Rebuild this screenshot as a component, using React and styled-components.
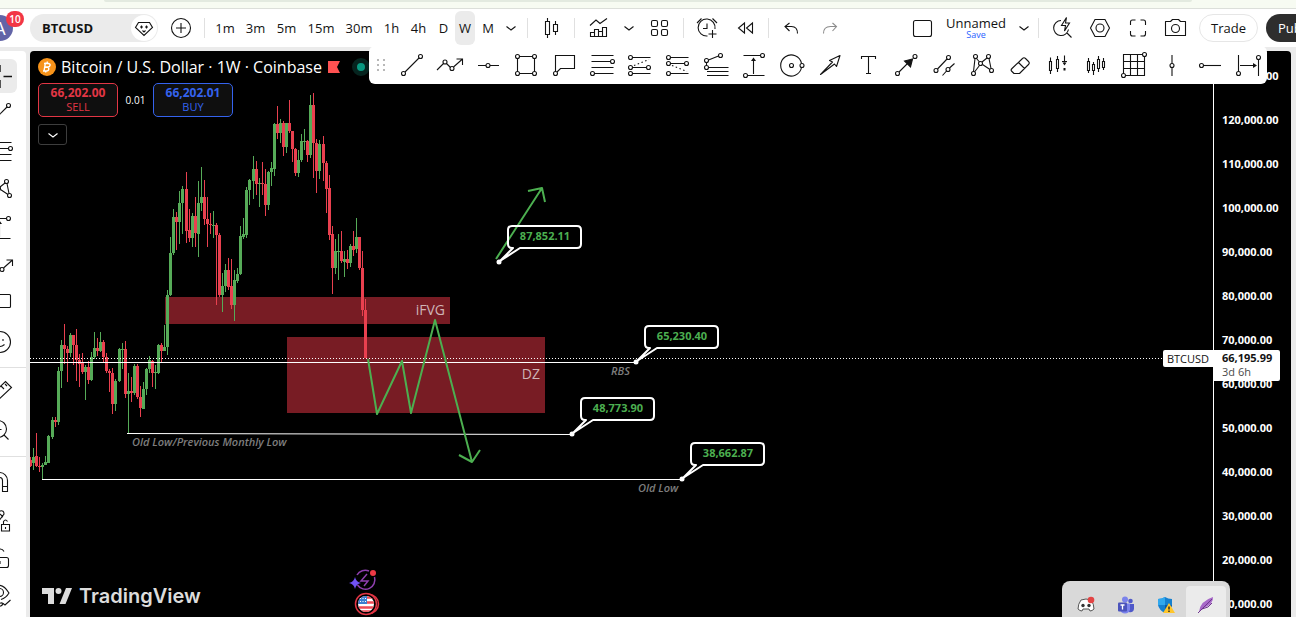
import React from 'react';
import styled, { createGlobalStyle } from 'styled-components';

// [x, direction, high, top, bottom, low], all in thirds of a pixel
const baseLeg = [
    [17, 'r', 470, 480, 498, 500], [25, 'g', 443, 470, 490, 510], [34, 'r', 399, 468, 498, 502],
    [43, 'r', 470, 498, 501, 516], [52, 'g', 488, 494, 500, 540], [61, 'g', 468, 486, 494, 496],
    [70, 'g', 404, 408, 488, 490], [82, 'g', 350, 361, 410, 418], [91, 'r', 350, 361, 366, 380],
    [100, 'g', 202, 213, 366, 374], [109, 'g', 120, 136, 213, 264], [118, 'r', 72, 136, 146, 192],
    [127, 'r', 138, 146, 160, 245], [136, 'g', 98, 106, 160, 172], [145, 'r', 104, 106, 134, 194],
    [154, 'r', 86, 134, 180, 242], [163, 'r', 162, 180, 192, 262], [172, 'r', 158, 190, 216, 222],
    [181, 'g', 194, 200, 216, 300], [190, 'r', 184, 202, 240, 252], [199, 'g', 156, 172, 240, 244],
    [208, 'g', 96, 145, 172, 176], [217, 'r', 114, 145, 152, 168], [226, 'g', 96, 126, 154, 156],
    [235, 'r', 120, 126, 170, 186], [244, 'r', 158, 170, 214, 220], [253, 'r', 208, 212, 220, 276],
    [262, 'r', 204, 220, 312, 342], [271, 'g', 238, 243, 312, 332], [283, 'g', 144, 148, 244, 246],
    [292, 'g', 130, 148, 151, 208], [301, 'r', 122, 148, 281, 294], [310, 'g', 220, 274, 282, 398],
    [319, 'r', 232, 274, 280, 306], [328, 'g', 192, 198, 280, 284], [337, 'r', 192, 198, 292, 296],
    [346, 'r', 258, 292, 325, 352], [355, 'g', 246, 268, 326, 328], [364, 'g', 204, 208, 268, 286],
    [373, 'g', 168, 180, 208, 220], [382, 'r', 180, 182, 220, 260], [391, 'g', 196, 216, 220, 268],
    [400, 'g', 132, 136, 220, 222], [409, 'r', 130, 136, 152, 186], [418, 'g', 76, 140, 152, 154],
];

const rallyLeg = [
    [52, 'g', 600, 616, 770, 795], [61, 'g', 440, 490, 616, 618], [70, 'g', 356, 382, 490, 495],
    [79, 'r', 366, 382, 396, 480], [88, 'g', 302, 340, 396, 462], [97, 'g', 288, 297, 340, 432],
    [109, 'r', 246, 297, 422, 458], [118, 'r', 356, 420, 443, 456], [127, 'g', 370, 378, 443, 470],
    [136, 'r', 320, 378, 430, 470], [145, 'g', 272, 340, 432, 500], [154, 'g', 230, 322, 340, 362],
    [163, 'r', 270, 322, 388, 405], [172, 'r', 320, 388, 402, 470], [181, 'r', 370, 402, 406, 432],
    [190, 'g', 362, 404, 408, 444], [199, 'r', 400, 406, 434, 644], [208, 'r', 430, 434, 614, 620],
    [217, 'g', 548, 588, 614, 666], [226, 'g', 522, 540, 588, 606], [235, 'r', 504, 540, 590, 600],
    [244, 'r', 506, 588, 644, 658], [253, 'g', 540, 570, 644, 692], [262, 'g', 534, 552, 572, 578],
    [271, 'g', 408, 438, 552, 556], [280, 'g', 384, 432, 440, 448], [289, 'g', 290, 300, 434, 444],
    [298, 'g', 266, 270, 300, 344], [310, 'g', 198, 236, 272, 326], [319, 'r', 212, 236, 282, 314],
    [328, 'g', 264, 280, 283, 350], [337, 'r', 216, 280, 283, 316], [346, 'r', 238, 282, 344, 378],
    [355, 'g', 242, 246, 344, 360], [364, 'g', 216, 234, 246, 288], [373, 'g', 98, 102, 236, 258],
    [382, 'r', 48, 102, 130, 148], [391, 'g', 86, 100, 130, 160], [400, 'r', 94, 100, 170, 198],
    [409, 'g', 98, 100, 170, 188], [418, 'r', 30, 100, 124, 130], [427, 'r', 122, 124, 178, 216],
    [436, 'r', 174, 178, 248, 258], [445, 'g', 180, 210, 248, 260], [454, 'g', 132, 154, 210, 216],
    [463, 'g', 116, 152, 156, 180], [472, 'r', 150, 154, 196, 216], [481, 'g', 14, 46, 196, 204],
    [490, 'r', 10, 46, 158, 264], [499, 'r', 146, 158, 242, 308], [508, 'g', 150, 162, 242, 268],
    [520, 'r', 138, 162, 218, 272], [529, 'r', 212, 218, 296, 368], [538, 'r', 256, 294, 434, 450],
    [547, 'r', 408, 432, 534, 612], [556, 'g', 448, 484, 534, 552], [565, 'g', 432, 482, 485, 570],
    [574, 'r', 424, 484, 514, 518], [583, 'g', 484, 508, 516, 560], [592, 'r', 480, 508, 518, 536],
    [601, 'g', 462, 468, 518, 532], [610, 'r', 422, 468, 480, 498], [619, 'g', 384, 442, 478, 488],
    [628, 'r', 440, 442, 534, 540], [637, 'r', 484, 534, 660, 678], [646, 'r', 628, 660, 804, 804],
];

const place = (dx, dy) => ([x, dir, ...levels]) => [
    Math.floor(x / 3) + dx,
    dir,
    ...levels.map(level => Math.round(level / 3) + dy),
];

const candles = [...baseLeg.map(place(-5, 249)), ...rallyLeg.map(place(120, 39))];

const priceTicks = [
    '130,000.00', '120,000.00', '110,000.00', '100,000.00', '90,000.00', '80,000.00', '70,000.00',
    '60,000.00', '50,000.00', '40,000.00', '30,000.00', '20,000.00', '10,000.00',
];

const callouts = [
    { x: 469, y: 211, price: '87,852.11' },
    { x: 606, y: 311, price: '65,230.40' },
    { x: 542, y: 383, price: '48,773.90' },
    { x: 652, y: 428, price: '38,662.87' },
];

const intervals = [
    ['1m', 30], ['3m', 31], ['5m', 31], ['15m', 38], ['30m', 38], ['1h', 27],
    ['4h', 27], ['D', 23], ['W', 20], ['M', 26],
];

const dot = (x, y) => <circle key={`${x}-${y}`} cx={x} cy={y} r="2" />;

const icons = {
    gem: <path d="M8.5 8.5h11l3 5-8.5 8-8.5-8zM11.5 11.5v3M16.5 11.5v3M10 13h3M15 13h3M12.5 16.5L14 18l1.500-1.500" />,
    plusCircle: <><circle cx="14" cy="14" r="9.500" /><path d="M14 9v10M9 14h10" /></>,
    chevron: <path d="M9.500 12.500l4.500 3.500 4.500-3.500" />,
    candles: <path d="M8.500 7.500h4v13h-4zM10.500 4v3.500M10.500 20.500V24M16.500 10.500h4v7h-4zM18.500 7v3.500M18.500 17.500V21" />,
    indicators: <path d="M5 11.500l6-5.500 4 3.500L22 4.500M5.500 22.500v-4h4v4zM9.500 22.500v-7h4v7zM13.500 22.500v-5h4v5zM17.500 22.500v-9h4v9z" />,
    grid: <><rect x="6.500" y="6.500" width="6" height="6" rx="1.500" /><rect x="16.500" y="6.500" width="6" height="6" rx="1.500" /><rect x="6.500" y="15.500" width="6" height="6" rx="1.500" /><rect x="16.500" y="15.500" width="6" height="6" rx="1.500" /></>,
    alarm: <path d="M15.500 22A8.500 8.500 0 1 1 23 15M15 9.500v5h-4M20.500 16v8M16.500 20h8M5 9l4.500-4.500M25 9l-4.500-4.500" />,
    replay: <path d="M10.500 9v10l-6-5zM18.500 9v10l-6-5z" />,
    undo: <path d="M12.500 9L8 12.500l4.500 4.500M8.500 12.500h6q6 0 6 7" />,
    redo: <path d="M16.500 9l4 3.500-4 4.500M20.500 12.500h-6q-7 0-7 7" />,
    layout: <rect x="4.500" y="6.500" width="18" height="16" rx="2" />,
    boltSearch: <path d="M13 6.500a7.500 7.500 0 1 0 7.500 9M18.500 18.500l5 5M18.500 3.500l-5 8h4l-1 5.500 5-8h-4z" />,
    hexagon: <><path d="M9 5.500h10l4.500 8.500-4.500 8.500H9L4.500 14z" /><circle cx="14" cy="14" r="4" /></>,
    fullscreen: <path d="M6.500 11V8q0-2 2-2h3M16.500 6h3q2 0 2 2v3M21.500 17v3q0 2-2 2h-3M11.500 22h-3q-2 0-2-2v-3" />,
    camera: <><path d="M3.500 7.500h5l2-2h6l2 2h5v14h-20z" strokeLinejoin="round" /><circle cx="13.500" cy="14.500" r="4" /></>,
    trend: <>{dot(5.5, 22.5)}{dot(22.5, 5.5)}<path d="M7 21L21 7" /></>,
    path: <>{dot(9, 11)}{dot(16, 17.5)}<path d="M1 19l6.500-6.500M10.500 12.500l4 4M17.500 16L26.500 8M20.500 8h6v6" /></>,
    horizontal: <>{dot(14, 14.5)}<path d="M4 14.500h8M16 14.500h9" /></>,
    rectangle: <>{dot(5.5, 5.5)}{dot(22.5, 5.5)}{dot(5.5, 22.5)}{dot(22.5, 22.5)}<path d="M7.500 5.500h13M7.500 22.500h13M5.500 7.500v13M22.500 7.500v13" /></>,
    comment: <>{dot(5.5, 22.5)}<path d="M5.500 20.500v-16h19v13h-14l-3.500 3.500" /></>,
    fib: <>{dot(24.5, 10.5)}{dot(4.5, 22.5)}<path d="M3.500 4.500h22M3.500 10.500h19M3.500 16.500h22M6.500 22.500h19" /></>,
    forecastUp: <>{dot(4.5, 6.5)}{dot(4.5, 16.5)}{dot(22.5, 16.5)}{dot(4.5, 22.5)}<path d="M6.500 6.500h18M6.500 16.500h14M6.500 22.500h18" /><path d="M8 14.500l15-6" strokeDasharray="1.5 2.5" /></>,
    forecastDown: <>{dot(4.5, 6.5)}{dot(4.5, 12.5)}{dot(22.5, 12.5)}{dot(4.5, 22.5)}<path d="M6.500 6.500h18M6.500 12.500h14M6.500 22.500h18" /><path d="M8 14.500l15 6" strokeDasharray="1.5 2.5" /></>,
    fan: <>{dot(18.5, 4.5)}{dot(4.5, 9.5)}{dot(4.5, 16.5)}<path d="M6.500 9l10-4M4.500 11.500v3M6.500 16.500h20M5 20.500h21.500M5 24.500h21.500" /></>,
    priceRange: <>{dot(22.5, 4.5)}{dot(5.5, 24.5)}<path d="M3.500 4.500h17M7.500 24.500h17M13.500 23V8" /><path d="M11 10l2.500-3.500L16 10z" fill="currentColor" stroke="none" /></>,
    circle: <>{dot(13.5, 14.5)}{dot(24, 14.5)}<path d="M23.500 12.500a10.500 10.500 0 1 0 0 4" /></>,
    arrowMarker: <path d="M4.500 23.500l12-12.500-3-1.500 10.500-5-3.500 11-2-2.500z" strokeLinejoin="round" />,
    text: <path d="M7.500 8V5.500h14V8M14.500 5.500v17M12 22.500h5" />,
    arrowLine: <>{dot(5.5, 22.5)}{dot(23, 5.5)}<path d="M7 21L17 11" /><path d="M20.500 8l-2 8-6-6z" fill="currentColor" /></>,
    parallel: <>{dot(18.5, 6.5)}{dot(6, 19.5)}{dot(18, 18.5)}<path d="M7.500 18L17 8M12.500 24.500l4-4.500M19.500 17l5-4.500" /></>,
    pattern: <>{dot(7.5, 5.5)}{dot(20.5, 5.5)}{dot(12.5, 12.5)}{dot(5.5, 22.5)}{dot(23.5, 19.5)}<path d="M7 7.500l-1.500 13M8.500 7.500l3 3.500M19 7l-5 4M21 7.500l2 10M11.500 14.500l-5 6.500M14.500 13.500l7.500 5" /></>,
    eraser: <path d="M6 17.500L16.500 7.500q1.500-1.500 3 0l3 3q1.500 1.500 0 3l-9 9H8l-2.500-2.500q-1-1 .5-2.500zM12.500 11.500l6 6" strokeLinejoin="round" />,
    barsMinus: <><path d="M5.500 10.500h2v9h-2zM6.500 6.500v4M6.500 19.500V23M12.500 8.500h2v9h-2zM13.500 5v3.500M13.500 17.500V21M20.500 4.500v7M18 10.500h5" /><path d="M18.500 11.500h4l-2 3zM19.500 17h2v2.500h-2z" fill="currentColor" stroke="none" /></>,
    barsGhost: <path d="M5.500 10.500h2v9h-2zM6.500 7v3.500M6.500 19.500V22M10.500 13.500h2v6h-2zM11.500 11v2.500M11.500 19.500V24M15.500 8.500h2v9h-2zM16.500 5v3.500M16.500 17.500V21M20.500 10.500h2v6h-2zM21.500 7v3.500M21.500 16.500V19" />,
    gridLines: <>{dot(24.5, 3.5)}{dot(3.5, 24.5)}<path d="M3.500 22.500v-19h19M24.500 5.500v19h-19M10.500 3.500v21M17.500 3.500v21M3.500 10.500h21M3.500 17.500h21" /></>,
    vertical: <>{dot(14, 14.5)}<path d="M14 4v8.500M14 16.500V25" /></>,
    ray: <>{dot(5.5, 14.5)}<path d="M7.500 14.500H25" /></>,
    dateRange: <>{dot(4.5, 22.5)}{dot(24.5, 6.5)}<path d="M4.500 4v16.500M24.500 8.500V25M6 14.500h15" /><path d="M19 12l4 2.500-4 2.500z" fill="currentColor" stroke="none" /></>,
    cross: <path d="M14 3v7M14 18v8M17.500 14.500H26M2 14.500h8" strokeWidth="1.4" />,
    box: <rect x="3.500" y="4.500" width="21" height="13" rx="1" />,
    smile: <><circle cx="14" cy="14" r="10.500" /><path d="M9.500 16.500q4.500 4 9 0M11 11v2M17 11v2" /></>,
    ruler: <path d="M2.500 18.500L19.500 2.500l6 6-17 16zM15 7l3 3M11.500 10l2 2M19 5l2 2" />,
    zoomOut: <><circle cx="12" cy="12" r="8.500" /><path d="M18 18l4.500 4.500M8.500 12.500h7" /></>,
    magnet: <path d="M5.500 23.500v-11a8 8 0 0 1 16 0v11h-5v-11a3 3 0 0 0-6 0v11zM16.500 18.500h5M5.500 18.500h5" />,
    drawLock: <path d="M4 18l10-13q4-1 4 3L9 20zM14 8l3 3M15.500 18.500h8v6.500h-8zM17.500 18.500v-3q2-3 4 0M19.500 21v2" />,
    lock: <><rect x="5.500" y="13.500" width="17" height="10" rx="2" /><path d="M9.500 13.500V9.500a4.500 4.500 0 0 1 8.500-2M14 17v3" /></>,
    eye: <><path d="M2 10q12-14 21 1-3 5-8 6.500M2 10q4 7 9 7.500" /><circle cx="13.500" cy="10.500" r="4" /><path d="M12 24q4 1 5-2.500-3-2-5 2.500zM17 21.500l2 1.500 5.500-5" /></>,
};

const drawingTools = [
    'trend', 'path', 'horizontal', 'rectangle', 'comment', 'fib', 'forecastUp', 'forecastDown',
    'fan', 'priceRange', 'circle', 'arrowMarker', 'text', 'arrowLine', 'parallel', 'pattern',
    'eraser', 'barsMinus', 'barsGhost', 'gridLines', 'vertical', 'ray', 'dateRange',
];

const sideGroups = [
    ['cross', 'trend', 'fib', 'pattern', 'priceRange', 'path', 'box', 'smile'],
    ['ruler', 'zoomOut'],
    ['magnet', 'drawLock', 'lock', 'eye'],
];

function Icon({ name }) {
    return (
        <IconSvg viewBox="0 0 28 28" aria-hidden="true">{icons[name]}</IconSvg>
    );
}

function Tool({ name, width, muted }) {
    return (
        <IconButton type="button" aria-label={name} $width={width} $muted={muted}>
            <Icon name={name} />
        </IconButton>
    );
}

function TopBar() {
    return (
        <Bar>
            <Account type="button">
                <Avatar>A</Avatar>
                <Badge>10</Badge>
            </Account>
            <SymbolButton type="button">
                BTCUSD
                <GemCircle><Icon name="gem" /></GemCircle>
            </SymbolButton>
            <Tool name="plusCircle" width={46} />
            <Divider />
            <Intervals>
                {intervals.map(([label, width]) => (
                    <Interval key={label} type="button" $width={width} $active={label === 'W'}>{label}</Interval>
                ))}
                <Tool name="chevron" width={20} />
            </Intervals>
            <Divider />
            <Tool name="candles" width={46} />
            <Divider />
            <Tool name="indicators" width={48} />
            <Tool name="chevron" width={12} />
            <Tool name="grid" width={48} />
            <Divider />
            <Tool name="alarm" width={44} />
            <Tool name="replay" width={40} />
            <Divider />
            <Tool name="undo" width={44} />
            <Tool name="redo" width={34} muted />
            <RightGroup>
                <Tool name="layout" width={38} />
                <LayoutName type="button">
                    Unnamed
                    <SaveText>Save</SaveText>
                </LayoutName>
                <Tool name="chevron" width={28} />
                <Divider />
                <RightTools>
                    <Tool name="boltSearch" width={38} />
                    <Tool name="hexagon" width={38} />
                    <Tool name="fullscreen" width={38} />
                    <Tool name="camera" width={38} />
                </RightTools>
                <TradeButton type="button">Trade</TradeButton>
                <PublishButton type="button">Publish</PublishButton>
            </RightGroup>
        </Bar>
    );
}

function SideBar() {
    return (
        <Side>
            {sideGroups.map((group, index) => (
                <SideGroup key={index}>
                    {group.map(name => (
                        <SideButton key={name} type="button" aria-label={name} $active={name === 'cross'}>
                            <Icon name={name} />
                        </SideButton>
                    ))}
                </SideGroup>
            ))}
        </Side>
    );
}

function Callout({ x, y, price }) {
    return (
        <g>
            <path
                d={`M${x + 14} ${y - 14}h-1q-4 0-4-4v-14q0-4 4-4h65q4 0 4 4v14q0 4-4 4h-57L${x + 1} ${y - 1}z`}
                fill="none"
                stroke="#fff"
                strokeWidth="2"
                strokeLinejoin="round"
            />
            <circle cx={x} cy={y} r="2.5" fill="#fff" />
            <CalloutText x={x + 46} y={y - 22}>{price}</CalloutText>
        </g>
    );
}

function Plot() {
    return (
        <PlotSvg>
            <g fill="#781c24">
                <rect x="135" y="246" width="285" height="27" />
                <rect x="257" y="286" width="258" height="76" />
            </g>
            <g shapeRendering="crispEdges">
                {candles.map(([x, dir, high, top, bottom, low]) => (
                    <g key={x} fill={dir === 'g' ? '#56ab58' : '#e9404f'}>
                        <rect x={x} y={high} width="1" height={low - high} />
                        <rect x={x - 1} y={top} width="3" height={Math.max(1, bottom - top)} />
                    </g>
                ))}
                <path d="M0 311.500h606M12 428.500h640" stroke="#fff" fill="none" />
                <path d="M0 307.500h1134" stroke="#fff" strokeDasharray="1 2" fill="none" />
            </g>
            <path d="M97 382.500L542 383.500" stroke="#fff" />
            <ZoneText x="415" y="264">iFVG</ZoneText>
            <ZoneText x="510" y="328">DZ</ZoneText>
            <LevelText x="102" y="395">Old Low/Previous Monthly Low</LevelText>
            <LevelText x="581" y="324">RBS</LevelText>
            <LevelText x="608" y="441">Old Low</LevelText>
            <g fill="none" stroke="#4caf50" strokeWidth="2" strokeLinejoin="round">
                <path d="M338 308l9 55 25-53 9 52 24-93 37 142M429 404l13 7 8-12" />
                <path d="M466 208l46-71M498 140l14-3 3 14" />
            </g>
            {callouts.map(callout => <Callout key={callout.price} {...callout} />)}
            <g fill="none" stroke="#8e3fae" strokeWidth="1.500">
                <path d="M327 524a9.500 9.500 0 0 1 12-4M344.500 526a9.500 9.500 0 0 1-17 8" />
                <path d="M337 523l-6 7h7l-4 5" />
            </g>
            <path d="M325 526q1 5 6 6-5 1-6 6-1-5-6-6 5-1 6-6z" fill="#7152f5" />
            <circle cx="343" cy="522" r="3" fill="#ee3946" />
            <g fill="#000" stroke="#e23544" strokeWidth="1.500">
                <circle cx="339" cy="553" r="9.500" />
                <circle cx="336" cy="553" r="10.500" />
            </g>
            <clipPath id="flag"><circle cx="336" cy="553" r="8" /></clipPath>
            <g clipPath="url(#flag)">
                <rect x="328" y="545" width="16" height="16" fill="#fff" />
                <path d="M328 546.500h16M328 551.500h16M328 556.500h16M328 560.500h16" stroke="#ef4a55" strokeWidth="2.500" />
                <rect x="328" y="545" width="9" height="8" fill="#3c7fd0" />
                <path d="M330 547.500h7M330 550.500h7" stroke="#fff" strokeDasharray="1 1.500" />
            </g>
        </PlotSvg>
    );
}

function Legend() {
    return (
        <LegendBox>
            <LegendTitle>
                <CoinSvg viewBox="0 0 18 18" aria-hidden="true">
                    <circle cx="9" cy="9" r="9" fill="#f7931a" />
                    <path d="M7.500 4.500L6 13M6 5.500h4.500q2 .5 1.500 2t-2 1.500H7q4 0 3.800 2T8.500 13H5M9.500 3.500L9 5M8 13l-.5 1.500" fill="none" stroke="#fff" strokeWidth="1.400" />
                </CoinSvg>
                <span>Bitcoin / U.S. Dollar · 1W · Coinbase</span>
                <FlagSvg viewBox="0 0 12 12" aria-hidden="true">
                    <path d="M0 0h12L9 6l3 6H0z" fill="#ff5252" />
                </FlagSvg>
                <StatusDot />
            </LegendTitle>
            <Quotes>
                <QuoteButton type="button" $color="#e23645"><b>66,202.00</b>SELL</QuoteButton>
                <Spread>0.01</Spread>
                <QuoteButton type="button" $color="#3563ee"><b>66,202.01</b>BUY</QuoteButton>
            </Quotes>
            <Collapse type="button" aria-label="Collapse legend"><Icon name="chevron" /></Collapse>
        </LegendBox>
    );
}

function Tray() {
    return (
        <TrayBox>
            <TrayItem>
                <TraySvg viewBox="0 0 18 18">
                    <path d="M4 4q5-2 10 0 3 4 3 9-2 2-4 2l-1-2H6l-1 2q-2 0-4-2 0-5 3-9z" fill="#fff" stroke="#555" />
                    <circle cx="6" cy="9.500" r="1.700" fill="#333" />
                    <circle cx="12" cy="9.500" r="1.700" fill="#333" />
                    <circle cx="14" cy="4" r="3.300" fill="#e34444" />
                </TraySvg>
            </TrayItem>
            <TrayItem>
                <TraySvg viewBox="0 0 18 18">
                    <circle cx="13.500" cy="5" r="2.300" fill="#5059c9" />
                    <circle cx="8" cy="3.500" r="3" fill="#7b83eb" />
                    <path d="M11 8h6v5q-1 4-5 3z" fill="#5059c9" />
                    <path d="M4 7.500h9v6q-1 4-5 4t-5-4z" fill="#7b83eb" />
                    <rect x="1" y="6.500" width="9" height="9" rx="1" fill="#4b53bc" />
                    <path d="M3.500 9h4M5.500 9v4.500" stroke="#fff" strokeWidth="1.300" />
                </TraySvg>
            </TrayItem>
            <TrayItem>
                <TraySvg viewBox="0 0 18 18">
                    <path d="M8 1q3 2 7 2v6q-1 5-7 8-6-3-7-8V3q4 0 7-2z" fill="#1580d0" />
                    <path d="M8 1v8H1V3q4 0 7-2z" fill="#31a8ee" />
                    <path d="M8 9h7q-1 5-7 8z" fill="#0c5aa5" />
                    <path d="M12 7l6 10H6z" fill="#ffc62b" />
                    <path d="M12 10.500v3M12 14.500v1.500" stroke="#222" strokeWidth="1.400" />
                </TraySvg>
            </TrayItem>
            <TrayItem $active>
                <TraySvg viewBox="0 0 18 18">
                    <path d="M2 16Q3 5 16 1q1 7-11 12z" fill="#a769c8" />
                    <path d="M1 17L15 3M5 13q7-1 10-6" fill="none" stroke="#70358f" />
                </TraySvg>
            </TrayItem>
        </TrayBox>
    );
}

function App() {
    return (
        <Page>
            <GlobalStyle />
            <BrowserEdge><AddressBar /></BrowserEdge>
            <TopBar />
            <Workspace>
                <SideBar />
                <Chart>
                    <PlotArea>
                        <Plot />
                        <Legend />
                        <Watermark>
                            <LogoSvg viewBox="0 0 30 16" aria-hidden="true">
                                <path d="M0 0h12v16H6V6H0z" />
                                <path d="M17.500 16L24 0h6l-6.500 16z" />
                                <circle cx="16.500" cy="3" r="3" />
                            </LogoSvg>
                            TradingView
                        </Watermark>
                        <SymbolTag>BTCUSD</SymbolTag>
                    </PlotArea>
                    <PriceScale>
                        {priceTicks.map(price => <Tick key={price}>{price}</Tick>)}
                        <PriceTag>66,195.99<small>3d 6h</small></PriceTag>
                    </PriceScale>
                </Chart>
                <DrawingBar>
                    <DragHandle viewBox="0 0 24 38" aria-hidden="true">
                        {[14, 19, 24].map(y => (
                            <g key={y}><rect x="8" y={y - 1} width="2" height="2" /><rect x="14" y={y - 1} width="2" height="2" /></g>
                        ))}
                    </DragHandle>
                    {drawingTools.map(name => <Tool key={name} name={name} width={38} />)}
                </DrawingBar>
                <Tray />
            </Workspace>
        </Page>
    );
}

export default App;


const GlobalStyle = createGlobalStyle`
    * {
        box-sizing: border-box;
    }

    body {
        margin: 0;
        background: #ebebeb;
        color: #131313;
        font-family: "Open Sans", "Noto Sans", sans-serif;
        font-size: 13px;
    }

    button {
        margin: 0;
        padding: 0;
        border: none;
        background: none;
        color: inherit;
        font: inherit;
        cursor: pointer;
    }
`;

const Page = styled.div`
    display: flex;
    flex-direction: column;
    height: 100vh;
    overflow: hidden;
`;

const BrowserEdge = styled.div`
    flex: none;
    height: 9px;
    padding: 0 8%;
    background: #f7fbf2;
    border-bottom: 1px solid #dcdfda;
`;

const AddressBar = styled.div`
    height: 2px;
    background: #e3eae0;
    border-radius: 0 0 4px 4px;
`;

const Bar = styled.header`
    display: flex;
    align-items: center;
    flex: none;
    height: 38px;
    background: #fff;
    overflow: hidden;

    > * {
        flex-shrink: 0;
    }
`;

const Account = styled.button`
    position: relative;
    width: 30px;
    height: 38px;
`;

const Avatar = styled.span`
    display: flex;
    align-items: center;
    justify-content: center;
    width: 26px;
    height: 26px;
    margin-left: -13px;
    border-radius: 50%;
    background: #6264a7;
    color: #fff;
    font-size: 18px;
`;

const Badge = styled.span`
    position: absolute;
    top: 2px;
    left: 6px;
    width: 18px;
    height: 16px;
    border-radius: 8px;
    background: #f23645;
    color: #fff;
    font-size: 10px;
    font-weight: 600;
    line-height: 16px;
    text-align: center;
`;

const SymbolButton = styled.button`
    display: flex;
    align-items: center;
    justify-content: space-between;
    width: 128px;
    height: 28px;
    padding: 0 1px 0 12px;
    border-radius: 14px;
    background: #ebebeb;
    font-weight: 700;
`;

const GemCircle = styled.span`
    display: flex;
    justify-content: center;
    width: 26px;
    height: 26px;
    border-radius: 50%;
    background: #fff;
    align-items: center;
`;

const IconSvg = styled.svg`
    display: block;
    flex: none;
    width: 28px;
    height: 28px;
    fill: none;
    stroke: currentColor;
    stroke-width: 1.1;
`;

const IconButton = styled.button`
    display: flex;
    align-items: center;
    justify-content: center;
    flex: none;
    width: ${props => props.$width}px;
    height: 38px;
    color: ${props => (props.$muted ? '#8c8c8c' : '#131313')};
`;

const Divider = styled.span`
    width: 1px;
    height: 20px;
    background: #e0e0e0;
`;

const Intervals = styled.div`
    display: flex;
    align-items: center;
    padding: 0 6px 0 5px;
`;

const Interval = styled.button`
    width: ${props => props.$width}px;
    height: 34px;
    border-radius: 6px;
    background: ${props => (props.$active ? '#ebebeb' : 'transparent')};
`;

const RightGroup = styled.div`
    display: flex;
    align-items: center;
    margin-left: auto;
`;

const RightTools = styled.div`
    display: flex;
    padding: 0 4px;
`;

const LayoutName = styled.button`
    display: flex;
    flex-direction: column;
    align-items: center;
    width: 68px;
    line-height: 14px;
`;

const SaveText = styled.span`
    color: #2962ff;
    font-size: 9px;
    line-height: 10px;
`;

const TradeButton = styled.button`
    width: 59px;
    height: 28px;
    border: 1px solid #e6e6e6;
    border-radius: 14px;
`;

const PublishButton = styled.button`
    width: 30px;
    height: 28px;
    margin-left: 8px;
    padding-left: 12px;
    border-radius: 14px 0 0 14px;
    background: #2e2e2e;
    color: #fff;
    text-align: left;
    overflow: hidden;
`;

const Workspace = styled.div`
    position: relative;
    display: flex;
    flex: 1;
    gap: 4px;
    min-height: 0;
    padding: 4px 5px 0 0;
`;

const Side = styled.nav`
    display: flex;
    flex-direction: column;
    flex: none;
    width: 26px;
    padding-top: 6px;
    background: #fff;
    border-radius: 0 4px 0 0;
    overflow: hidden;
`;

/* the rail is wider than its window, so only the right half of each icon shows */
const SideGroup = styled.div`
    display: flex;
    flex-direction: column;
    align-items: flex-end;
    padding-right: 9px;

    & + & {
        margin-top: 6px;
        padding-top: 6px;
        border-top: 1px solid #e0e0e0;
    }
`;

const SideButton = styled.button`
    display: flex;
    align-items: center;
    justify-content: center;
    width: 34px;
    height: 34px;
    margin: 2px 0;
    border-radius: 6px;
    background: ${props => (props.$active ? '#ebebeb' : 'transparent')};
`;

const Chart = styled.main`
    display: flex;
    flex: 1;
    min-width: 0;
    background: #000;
    border-radius: 4px 4px 0 0;
    color: #fff;
    overflow: hidden;
`;

const PlotArea = styled.section`
    position: relative;
    display: flex;
    flex-direction: column;
    justify-content: space-between;
    flex: 1;
    min-width: 0;
`;

const PlotSvg = styled.svg`
    position: absolute;
    inset: 0;
    width: 100%;
    height: 100%;
`;

const ZoneText = styled.text`
    fill: #cfb4b6;
    font-size: 14px;
    text-anchor: end;
`;

const LevelText = styled.text`
    fill: #7d7d7d;
    font-size: 11px;
    font-style: italic;
    font-weight: 600;
`;

const CalloutText = styled.text`
    fill: #4caf50;
    font-size: 11px;
    font-weight: 700;
    text-anchor: middle;
`;

const LegendBox = styled.div`
    position: relative;
    padding: 6px 8px;
`;

const LegendTitle = styled.div`
    display: flex;
    align-items: center;
    height: 20px;
    font-size: 16px;
    white-space: nowrap;
`;

const CoinSvg = styled.svg`
    width: 18px;
    height: 18px;
    margin-right: 5px;
`;

const FlagSvg = styled.svg`
    width: 12px;
    height: 12px;
    margin: 0 12px 0 6px;
`;

const StatusDot = styled.span`
    width: 18px;
    height: 18px;
    border: 5px solid #06241f;
    border-radius: 50%;
    background: #089981;
`;

const Quotes = styled.div`
    display: flex;
    align-items: center;
    margin: 6px 0 7px;
`;

const QuoteButton = styled.button`
    display: flex;
    flex-direction: column;
    align-items: center;
    justify-content: center;
    width: 80px;
    height: 34px;
    border: 1px solid ${props => props.$color};
    border-radius: 5px;
    background: #0f0f0f;
    color: ${props => props.$color};
    font-size: 11px;
    line-height: 14px;

    b {
        font-size: 12px;
        font-weight: 700;
    }
`;

const Spread = styled.span`
    width: 35px;
    font-size: 10px;
    text-align: center;
`;

const Collapse = styled.button`
    display: flex;
    align-items: center;
    justify-content: center;
    width: 29px;
    height: 21px;
    border: 1px solid #3d3d3d;
    border-radius: 3px;
`;

const Watermark = styled.div`
    position: relative;
    display: flex;
    align-items: center;
    gap: 7px;
    padding: 0 0 8px 12px;
    color: #dcdcdc;
    font-family: Inter, sans-serif;
    font-size: 20px;
    font-weight: 600;
    line-height: 26px;
`;

const LogoSvg = styled.svg`
    width: 30px;
    height: 16px;
    fill: currentColor;
`;

const SymbolTag = styled.span`
    position: absolute;
    top: 299px;
    right: 0;
    width: 50px;
    border-radius: 2px 0 0 2px;
    background: #fff;
    color: #131313;
    font-size: 11px;
    line-height: 17px;
    text-align: center;
`;

const PriceScale = styled.aside`
    position: relative;
    flex: none;
    width: 78px;
    padding-top: 3px;
    border-left: 1px solid #fff;
    overflow: hidden;
`;

const Tick = styled.div`
    height: 44px;
    padding-left: 8px;
    font-size: 11px;
    font-weight: 700;
    line-height: 44px;
`;

const PriceTag = styled.div`
    position: absolute;
    top: 299px;
    left: 0;
    display: flex;
    flex-direction: column;
    width: 66px;
    padding: 1px 0 2px 8px;
    border-radius: 0 2px 2px 0;
    background: #fff;
    color: #131313;
    font-size: 11px;
    font-weight: 700;
    line-height: 14px;

    small {
        color: #4a4a4a;
        font-size: 11px;
        font-weight: 400;
    }
`;

const DrawingBar = styled.div`
    position: absolute;
    top: -1px;
    right: 29px;
    display: flex;
    height: 38px;
    border-radius: 6px;
    background: #fff;
`;

const DragHandle = styled.svg`
    width: 24px;
    height: 38px;
    fill: #b8b8b8;
`;

const TrayBox = styled.div`
    position: absolute;
    right: 66px;
    bottom: 0;
    display: flex;
    padding: 5px 4px 0;
    border-radius: 8px 8px 0 0;
    background: #d9d9d9;
`;

const TrayItem = styled.span`
    display: flex;
    align-items: center;
    justify-content: center;
    width: 40px;
    height: 31px;
    padding-top: 7px;
    border-radius: 4px 4px 0 0;
    background: ${props => (props.$active ? '#ebebeb' : 'transparent')};
`;

const TraySvg = styled.svg`
    width: 18px;
    height: 18px;
`;
